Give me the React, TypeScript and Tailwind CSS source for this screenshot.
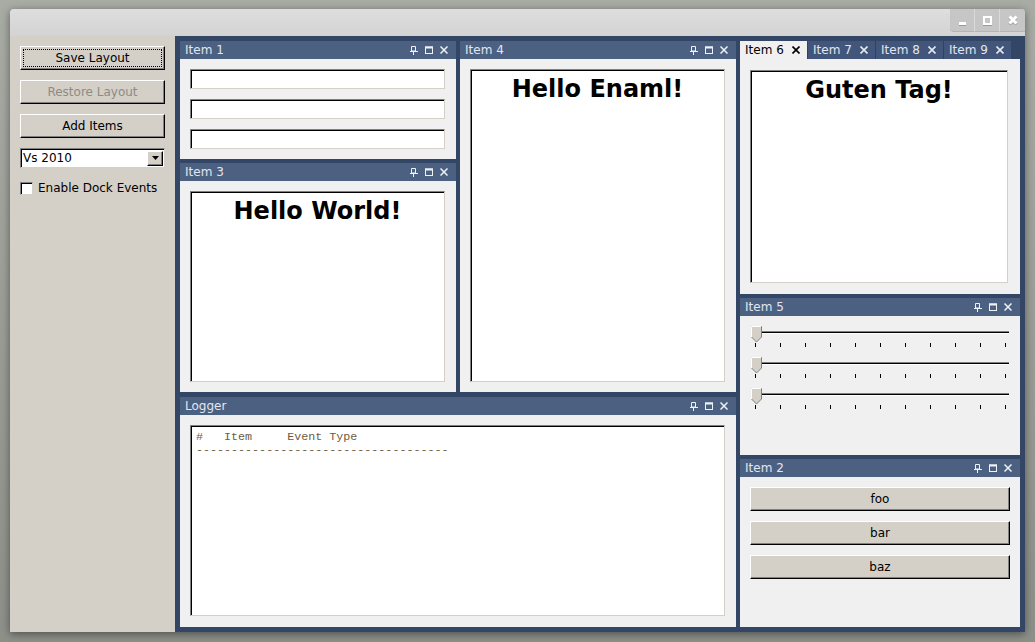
import React from "react"

const sans = "font-['DejaVu_Sans','Liberation_Sans',sans-serif]"

const raised =
  "bg-[#d4d0c8] border border-t-white border-l-white border-b-black border-r-black shadow-[inset_-1px_-1px_0_#808080]"
const sunken =
  "bg-white border border-t-[#808080] border-l-[#808080] border-b-[#d4d0c8] border-r-[#d4d0c8] shadow-[inset_1px_1px_0_#000]"

function PinIcon() {
  return (
    <svg width="8" height="9" viewBox="0 0 8 9" className="block">
      <path d="M1.5 0.5h4v4.5h-4z" fill="none" stroke="currentColor" />
      <path d="M0 5.5h8M3.5 5.5v3.5" stroke="currentColor" />
    </svg>
  )
}

function MaxIcon() {
  return (
    <svg width="8" height="8" viewBox="0 0 8 8" className="block">
      <rect x="0.5" y="1" width="7" height="6.5" fill="none" stroke="currentColor" />
      <path d="M0 1.5h8" stroke="currentColor" strokeWidth="2" />
    </svg>
  )
}

function CloseIcon({ size = 8, width = 1.5 }: { size?: number; width?: number }) {
  return (
    <svg width={size} height={size} viewBox="0 0 8 8" className="block">
      <path d="M0.5 0.5l7 7M7.5 0.5l-7 7" stroke="currentColor" strokeWidth={width} />
    </svg>
  )
}

interface DockPanelProps {
  title: string
  className?: string
  bodyClass?: string
  children?: React.ReactNode
}

function DockPanel({ title, className = "", bodyClass = "", children }: DockPanelProps) {
  return (
    <div className={`flex flex-col ${className}`}>
      <div className="h-[18px] shrink-0 bg-[#4c6082] flex items-center pl-[5px] pr-[8px] text-[12px] text-[#e1e7f0]">
        <span className="flex-1 leading-none">{title}</span>
        <div className="flex items-center gap-[7px] text-[#eef2f7]">
          <PinIcon />
          <MaxIcon />
          <CloseIcon />
        </div>
      </div>
      <div className={`flex-1 min-h-0 bg-[#f0f0f0] ${bodyClass}`}>{children}</div>
    </div>
  )
}

function Slider() {
  const ticks = Array.from({ length: 11 })
  return (
    <div className="relative h-[31px] w-[258px]">
      <div className="absolute left-[4px] right-0 top-[5px] h-[3px] border-t border-t-[#808080] bg-black border-b border-b-white" />
      <svg width="11" height="17" viewBox="0 0 11 17" className="absolute left-0 top-0">
        <path d="M0.5 0.5h10v10.5l-5 5l-5-5z" fill="#d4d0c8" stroke="#808080" />
        <path d="M0.5 11v-10.5h9.5" fill="none" stroke="#fff" />
      </svg>
      <div className="absolute left-[4px] w-[251px] top-[17px] flex justify-between">
        {ticks.map((_, i) => (
          <div key={i} className="w-px h-[4px] bg-black" />
        ))}
      </div>
    </div>
  )
}

const bigText = `h-full ${sunken} text-center font-bold text-[24px] leading-[28px] pt-[5px]`

function TabArea() {
  const tabs = ["Item 6", "Item 7", "Item 8", "Item 9"]
  return (
    <div className="h-[253px] flex flex-col">
      <div className="h-[18px] shrink-0 flex">
        {tabs.map((t, i) => (
          <div
            key={t}
            className={
              i === 0
                ? "h-full w-[67px] flex items-center justify-between pl-[5px] pr-[7px] text-[12px] bg-[#f0f0f0] text-black"
                : "h-full w-[68px] flex items-center justify-between pl-[5px] pr-[7px] text-[12px] bg-[#41567a] text-[#e1e7f0] border-l border-l-[#2f4262]"
            }
          >
            <span className="leading-none">{t}</span>
            <CloseIcon size={8} width={1.7} />
          </div>
        ))}
      </div>
      <div className="flex-1 bg-[#f0f0f0] pt-[11px] pb-[11px] pl-[10px] pr-[12px]">
        <div className={bigText}>Guten Tag!</div>
      </div>
    </div>
  )
}

export default function App() {
  return (
    <div className={`w-[1035px] h-[642px] overflow-hidden bg-gradient-to-b from-[#a9aba5] to-[#8d9089] pl-[10px] pt-[9px] ${sans}`}>
      <div className="w-[1015px] h-[623px] flex flex-col rounded-t-[4px] overflow-hidden shadow-[0_2px_8px_rgba(0,0,0,0.45)]">
        {/* title bar */}
        <div className="h-[27px] shrink-0 bg-gradient-to-b from-[#dedede] to-[#d3d3d3] flex justify-end">
          <div className="flex h-[23px]">
            <div className="w-[24px] h-full bg-[#c6c6c6] rounded-bl-[4px] border-b border-b-[#b4b4b4] flex items-end justify-center pb-[6px]">
              <div className="w-[7px] h-[3px] bg-white shadow-[0_1px_0_#9a9a9a]" />
            </div>
            <div className="w-[25px] h-full bg-[#c6c6c6] border-l border-l-[#dadada] border-b border-b-[#b4b4b4] flex items-center justify-center">
              <div className="w-[9px] h-[9px] border-[2px] border-white shadow-[0_1px_0_#9a9a9a]" />
            </div>
            <div className="w-[26px] h-full bg-[#c6c6c6] border-l border-l-[#dadada] border-b border-b-[#b4b4b4] flex items-center justify-center text-white">
              <svg width="10" height="10" viewBox="0 0 10 10">
                <path d="M1.5 1.5l7 7M8.5 1.5l-7 7" stroke="#9a9a9a" strokeWidth="3" transform="translate(0 1)" />
                <path d="M1.5 1.5l7 7M8.5 1.5l-7 7" stroke="#fff" strokeWidth="3" />
              </svg>
            </div>
          </div>
        </div>

        <div className="flex-1 min-h-0 flex">
          {/* left controls */}
          <div className="w-[165px] shrink-0 bg-[#d4d0c8] pt-[10px] px-[10px] flex flex-col text-[12px] text-black">
            <button className={`h-[24px] w-[145px] ${raised} outline-1 outline-dotted outline-black -outline-offset-4`}>
              Save Layout
            </button>
            <button className={`mt-[10px] h-[24px] w-[145px] ${raised} text-[#8e8b85]`}>Restore Layout</button>
            <button className={`mt-[10px] h-[24px] w-[145px] ${raised}`}>Add Items</button>
            <div className={`mt-[10px] h-[20px] w-[145px] ${sunken} flex items-center justify-between pl-[2px] pr-[1px]`}>
              <span>Vs 2010</span>
              <div className={`w-[16px] h-[15px] ${raised} flex items-center justify-center`}>
                <svg width="7" height="4" viewBox="0 0 7 4">
                  <path d="M0 0h7l-3.5 4z" fill="#000" />
                </svg>
              </div>
            </div>
            <div className="mt-[11px] flex items-center gap-[5px]">
              <div className={`w-[13px] h-[13px] ${sunken}`} />
              <span>Enable Dock Events</span>
            </div>
          </div>

          {/* dock area */}
          <div className="flex-1 bg-[#334666] p-[5px] flex gap-[4px] text-black">
            <div className="w-[556px] flex flex-col gap-[5px]">
              <div className="h-[351px] flex gap-[4px]">
                <div className="w-[276px] flex flex-col gap-[4px]">
                  <DockPanel title="Item 1" className="h-[118px]" bodyClass="pt-[10px] pl-[10px] pr-[11px] flex flex-col gap-[10px]">
                    <div className={`h-[20px] ${sunken}`} />
                    <div className={`h-[20px] ${sunken}`} />
                    <div className={`h-[20px] ${sunken}`} />
                  </DockPanel>
                  <DockPanel title="Item 3" className="flex-1" bodyClass="p-[10px] pr-[11px]">
                    <div className={bigText}>Hello World!</div>
                  </DockPanel>
                </div>
                <DockPanel title="Item 4" className="w-[276px]" bodyClass="p-[10px] pr-[11px]">
                  <div className={bigText}>Hello Enaml!</div>
                </DockPanel>
              </div>
              <DockPanel title="Logger" className="flex-1" bodyClass="pt-[10px] pb-[11px] pl-[10px] pr-[11px]">
                <div className={`h-full ${sunken} pt-[5px] pl-[5px] font-['Liberation_Mono',monospace] text-[11.7px] leading-[13px] text-[#6e5c3e] whitespace-pre`}>
                  {"#   Item     Event Type\n------------------------------------"}
                </div>
              </DockPanel>
            </div>

            <div className="w-[280px] flex flex-col gap-[4px]">
              <TabArea />
              <DockPanel title="Item 5" className="h-[157px]" bodyClass="pt-[10px] pl-[11px] flex flex-col">
                <Slider />
                <Slider />
                <Slider />
              </DockPanel>
              <DockPanel title="Item 2" className="flex-1" bodyClass="pt-[10px] pl-[10px] pr-[10px] flex flex-col gap-[10px] text-[12px]">
                <button className={`h-[24px] w-full ${raised}`}>foo</button>
                <button className={`h-[24px] w-full ${raised}`}>bar</button>
                <button className={`h-[24px] w-full ${raised}`}>baz</button>
              </DockPanel>
            </div>
          </div>
        </div>
      </div>
    </div>
  )
}
